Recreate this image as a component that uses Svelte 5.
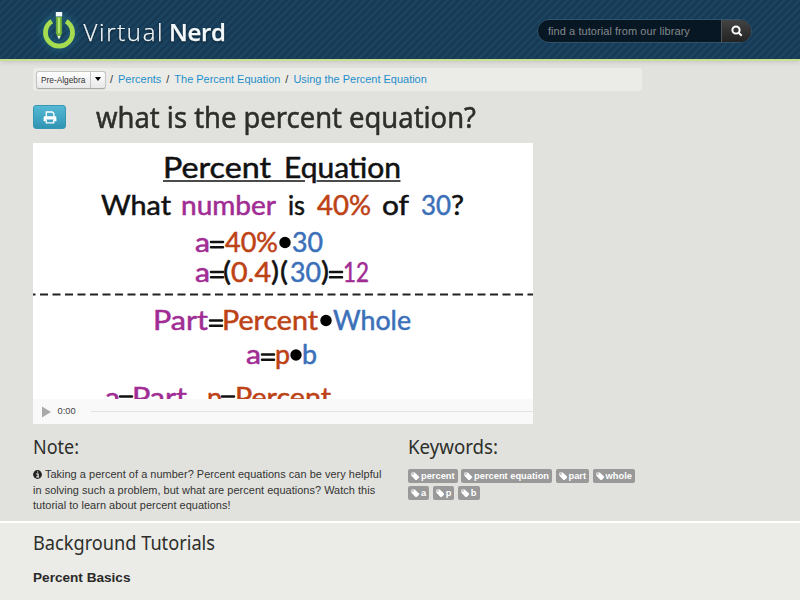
<script>
  const purple = '#a02c94', orange = '#bd4215', blue = '#3b70b9', ink = '#111';
  // text, left edge, baseline, width, colour, size
  const words = [
    ['Percent', 130, 35, 108, ink, 28], ['Equation', 251, 35, 117, ink, 28],
    ['What', 68, 72, 70, ink, 26], ['number', 148, 72, 95, purple, 26], ['is', 255, 72, 17, ink, 26],
    ['40%', 284, 72, 54, orange, 26], ['of', 349, 72, 27, ink, 26], ['30', 388, 72, 30, blue, 26], ['?', 418, 72, 13, ink, 26],
    ['a', 162, 109, 15, purple, 26], ['40%', 192, 109, 53, orange, 26], ['30', 259, 109, 31, blue, 26],
    ['a', 162, 139, 15, purple, 26], ['(', 190, 138, 8, ink, 26], ['0.4', 198, 139, 40, orange, 26], [')', 238, 138, 8, ink, 26],
    ['(', 247, 138, 8, ink, 26], ['30', 257, 139, 31, blue, 26], [')', 288, 138, 8, ink, 26], ['12', 310, 139, 26, purple, 26],
    ['Part', 120, 187, 55, purple, 26], ['Percent', 189, 187, 96, orange, 26], ['Whole', 300, 187, 78, blue, 26],
    ['a', 213, 221, 15, purple, 26], ['p', 242, 221, 15, orange, 26], ['b', 269, 221, 15, blue, 26],
    ['a', 72, 264, 15, purple, 26], ['Part', 99, 264, 55, purple, 26], ['p', 174, 264, 15, orange, 26], ['Percent', 202, 264, 96, orange, 26]
  ];
  const equals = [[178, 101.5], [178, 131.5], [297, 131.5], [177, 180], [229, 214], [87, 256], [189, 256]];
  const dots = [[252, 99.5], [293, 177.5], [263, 212]];
  const tags = ['percent', 'percent equation', 'part', 'whole', 'a', 'p', 'b'];
</script>

<header>
  <svg class="logo" width="200" height="52" viewBox="0 0 200 52">
    <defs>
      <filter id="glow" x="-50%" y="-50%" width="200%" height="200%"><feGaussianBlur stdDeviation="3.5" /></filter>
    </defs>
    <circle cx="24" cy="28" r="14" fill="none" stroke="#2786a0" stroke-width="8" opacity=".4" filter="url(#glow)" />
    <path d="M16.8 17.2 A13.5 13.5 0 1 0 31.2 17.2" fill="none" stroke="#a5dc50" stroke-width="4.8" />
    <path d="M20.7 12.5h6.6v17l-3.3 6.5-3.3-6.5z" fill="#79b83b" stroke="#174767" stroke-width=".8" />
    <path d="M24 14v15" stroke="#b1e66a" stroke-width="2" />
    <path d="M20.8 8h6.4v4.4h-6.4zM22.4 32h3.2l-1.6 3.3z" fill="#f2fbff" />
    <g class="wordmark">
      <text x="48.5" y="36.5" textLength="79" lengthAdjust="spacing" font-weight="300">Virtual</text>
      <text x="134" y="36.5" textLength="57" lengthAdjust="spacing" font-weight="600">Nerd</text>
    </g>
  </svg>
  <div class="search">
    <span>find a tutorial from our library</span>
    <button aria-label="Search">
      <svg width="12" height="12" viewBox="0 0 12 12"><circle cx="5" cy="5" r="3.6" /><path d="M7.7 7.7 10.7 10.7" /></svg>
    </button>
  </div>
</header>

<main>
  <nav>
    <div class="split"><span>Pre-Algebra</span><b><i></i></b></div>
    <em>/</em><a href="#percents">Percents</a>
    <em>/</em><a href="#equation">The Percent Equation</a>
    <em>/</em><a href="#using">Using the Percent Equation</a>
  </nav>

  <div class="title">
    <button class="print" aria-label="Print">
      <svg width="14" height="13" viewBox="0 0 14 13">
        <path d="M3.3 6V1h6l1.6 1.6V6" fill="none" stroke="#fff" stroke-width="1.3" />
        <path d="M2 5.3h10q1.4 0 1.4 1.4v3.6h-2.2V8.5H2.8v1.8H.6V6.7Q.6 5.3 2 5.3z" fill="#fff" />
        <path d="M3.3 8.5v3.3h7.4V8.5" fill="none" stroke="#fff" stroke-width="1.3" />
      </svg>
    </button>
    <h1><svg width="400" height="42"><text x="0" y="28" textLength="380" lengthAdjust="spacingAndGlyphs">what is the percent equation?</text></svg></h1>
  </div>

  <div class="player">
    <svg class="poster" width="500" height="256" viewBox="0 0 500 256">
      {#each words as [t, x, y, w, c, s]}
        <text {x} {y} fill={c} stroke={c} font-size={s} textLength={w} lengthAdjust="spacingAndGlyphs">{t}</text>
      {/each}
      <path d="M130 38H272M283.5 38H367.5" stroke={ink} stroke-width="1.5" />
      {#each equals as [x, y]}
        <path d="M{x} {y - 2.6}h12m-12 5.4h12" stroke={ink} stroke-width="2.5" stroke-linecap="round" />
      {/each}
      {#each dots as [cx, cy]}
        <circle {cx} {cy} r="5.7" fill="#000" />
      {/each}
      <path d="M0 151.5H500" stroke="#222" stroke-width="1.8" stroke-dasharray="8 4.5" stroke-dashoffset="5.5" />
    </svg>
    <div class="controls">
      <svg width="10" height="12" viewBox="0 0 10 12"><path d="M0 .5 9 6 0 11.5z" fill="#aaa" /></svg>
      <span>0:00</span>
      <div class="track"></div>
    </div>
  </div>

  <div class="columns">
    <section class="note">
      <h2><svg width="60" height="28"><text x="0" y="20" textLength="46" lengthAdjust="spacingAndGlyphs">Note:</text></svg></h2>
      <p>
        <svg class="info" width="9" height="9" viewBox="0 0 9 9"><circle cx="4.5" cy="4.5" r="4.4" fill="#222" /><path d="M3.2 4h1.9v3M3.1 7h3M4.1 2h1.1" fill="none" stroke="#fff" stroke-width="1.1" /></svg>
        Taking a percent of a number? Percent equations can be very helpful<br />in solving such a problem, but what are percent equations? Watch this<br />tutorial to learn about percent equations!
      </p>
    </section>
    <section class="keywords">
      <h2><svg width="100" height="28"><text x="0" y="20" textLength="90" lengthAdjust="spacingAndGlyphs">Keywords:</text></svg></h2>
      <div class="tags">
        {#each tags as tag}
          <span><svg width="8.5" height="8.5" viewBox="0 0 9 9"><path fill-rule="evenodd" d="M.4 1Q.4.4 1 .4H4L8.7 5Q9 5.4 8.7 5.8L5.8 8.7Q5.4 9 5 8.7L.4 4zM2 1.2a.8.8 0 1 0 .1 0z" fill="#fff" /></svg>{tag}</span>
        {/each}
      </div>
    </section>
  </div>
</main>

<section class="background">
  <h2><svg width="190" height="30"><text x="0" y="20" textLength="182" lengthAdjust="spacingAndGlyphs">Background Tutorials</text></svg></h2>
  <h3>Percent Basics</h3>
</section>

<style>
  :global(body) { margin: 0; background: #e1e2dd; }
  :global(#app) {
    width: 800px; height: 600px; overflow: hidden; display: flex; flex-direction: column;
    font: 10.94px/15.6px "Liberation Sans", Arial, sans-serif; color: #333;
  }
  svg { display: block; flex: none; }
  header {
    box-sizing: border-box; height: 61px; flex: none; display: flex; align-items: flex-start; justify-content: space-between;
    padding: 4px 48px 0 35px; border-bottom: 2px solid #c7df91; box-shadow: 0 1px 5px #0002;
    background: repeating-linear-gradient(135deg, #173b56 0 2.2px, #1c4562 3.2px 4.2px, #173b56 5.3px);
  }
  .wordmark { fill: #f3f8fa; font: 24px "Open Sans", "Noto Sans", sans-serif; filter: drop-shadow(0 1px 1px #0008); }
  .wordmark text { stroke: #f3f8fa; stroke-width: .25px; }
  .search {
    box-sizing: border-box; width: 215px; height: 24px; margin-top: 15px; display: flex; overflow: hidden;
    border: 1px solid #31546b; border-radius: 12px; background: #071723; color: #84898c;
  }
  .search span { flex: 1; padding-left: 10px; line-height: 22px; font-size: 11px; letter-spacing: .06px; white-space: nowrap; }
  .search button {
    width: 30px; padding: 0; border: 0; border-left: 1px solid #555; background: linear-gradient(#444, #222);
    display: flex; align-items: center; justify-content: center;
  }
  .search circle, .search path { fill: none; stroke: #fff; stroke-width: 2; }

  main { box-sizing: border-box; height: 460px; flex: none; padding: 7px 33px 0; display: flex; flex-direction: column; }
  nav {
    box-sizing: border-box; width: 609px; height: 23px; padding-left: 3px; display: flex; align-items: center;
    background: #ebebe7; border-radius: 3px; flex: none;
  }
  .split {
    box-sizing: border-box; width: 70px; height: 18px; display: flex; margin-right: 4px; border: 1px solid #c3c3c3; border-bottom-color: #aaa;
    border-radius: 3px; background: linear-gradient(#fff, #e8e8e8); font-size: 8.3px; line-height: 17px; box-shadow: 0 1px 1px #0001;
  }
  .split span { width: 53px; padding-left: 4px; box-sizing: border-box; }
  .split b { flex: 1; border-left: 1px solid #c3c3c3; display: flex; justify-content: center; padding-top: 5px; }
  .split i { width: 0; height: 0; border: 3.3px solid transparent; border-top: 4px solid #000; border-bottom: 0; }
  em { font-style: normal; margin-right: 5px; }
  nav a { color: #1f8fcb; text-decoration: none; margin-right: 5px; letter-spacing: .01px; }

  .title { display: flex; height: 52px; flex: none; }
  .print {
    width: 33px; height: 24px; margin: 14px 30px 0 0; padding: 0; border: 1px solid #3697b3; border-radius: 3px;
    background: linear-gradient(#55b9d5, #3095b3); display: flex; align-items: center; justify-content: center;
  }
  h1, h2, h3 { margin: 0; }
  h1 text, h2 text { font-family: "Noto Sans", "Open Sans", sans-serif; fill: #2d2f2b; }
  h1 { padding-top: 9px; filter: drop-shadow(0 1px 0 #fff9); }
  h1 svg { overflow: visible; }
  h1 text { font-size: 28.5px; font-weight: 400; stroke: #2d2f2b; stroke-width: .55px; }
  h2 text { font-size: 19px; font-weight: 400; }

  .player { width: 500px; height: 281px; background: #fff; flex: none; }
  .poster { overflow: hidden; }
  .poster text { font-family: Lato, "Open Sans", sans-serif; font-weight: 400; stroke-width: .5px; stroke-linejoin: round; }
  .controls { box-sizing: border-box; height: 25px; padding-left: 9px; display: flex; align-items: center; background: #f9f9f9; }
  .controls span { width: 33px; margin-left: 5.5px; font-size: 9.3px; color: #444; }
  .track { height: 1px; flex: 1; background: #e3e3e3; }

  .columns { display: flex; padding-top: 10px; }
  .note { width: 375px; }
  h2 { height: 28px; }
  p { margin: 5px 0 0; white-space: nowrap; letter-spacing: .04px; }
  .info { display: inline-block; vertical-align: -1px; }
  .keywords { width: 234px; }
  .tags { display: flex; flex-wrap: wrap; gap: 3px 3.5px; padding-top: 7px; }
  .tags span {
    box-sizing: border-box; height: 14px; padding: 1px 3px 0; display: flex; align-items: center; gap: 1.5px;
    background: #999; border-radius: 2px; color: #fff; font-weight: bold; font-size: 9.3px; line-height: 13px;
  }
  .tags svg { margin-top: -1.5px; }
  .background { flex: 1; border-top: 2px solid #fff; background: #ebebe7; padding: 7px 33px 0; }
  .background h2 { height: 40px; }
  h3 { font-size: 13.6px; line-height: 16px; color: #292a27; }
</style>
